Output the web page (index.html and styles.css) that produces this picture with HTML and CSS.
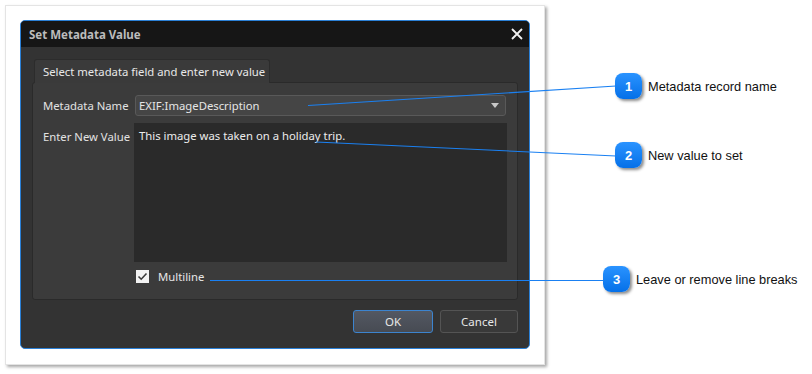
FILE: index.html
```html
<!DOCTYPE html>
<html lang="en">
<head>
    <meta charset="UTF-8">
    <meta name="viewport" content="width=device-width, initial-scale=1.0">
    <title>Set Metadata Value</title>
    <link rel="stylesheet" href="styles.css">
</head>
<body>
  <div class="page">
    <div class="shot">
      <div class="dialog">
        <div class="titlebar">
          <span class="title">Set Metadata Value</span>
          <svg class="close" width="12" height="12" viewBox="0 0 12 12">
            <path d="M1 1 L11 11 M11 1 L1 11" stroke="#f2f2f2" stroke-width="1.8" fill="none"/>
          </svg>
        </div>
        <div class="content">
          <div class="tab">Select metadata field and enter new value</div>
          <div class="panel">
            <div class="row">
              <span class="label">Metadata Name</span>
              <div class="combo">
                <span>EXIF:ImageDescription</span>
                <span class="arrow"></span>
              </div>
            </div>
            <div class="row">
              <span class="label label-top">Enter New Value</span>
              <div class="textarea">This image was taken on a holiday trip.</div>
            </div>
            <div class="check-row">
              <span class="checkbox">
                <svg width="13" height="13" viewBox="0 0 13 13">
                  <path d="M2.5 6.5 L5.2 9.2 L10.5 3.5" stroke="#3a3a3a" stroke-width="1.6" fill="none"/>
                </svg>
              </span>
              <span>Multiline</span>
            </div>
          </div>
          <div class="buttons">
            <button class="btn btn-ok">OK</button>
            <button class="btn">Cancel</button>
          </div>
        </div>
      </div>
    </div>

    <!-- callout lines drawn over the screenshot -->
    <svg class="lines" width="812" height="374" viewBox="0 0 812 374">
      <g stroke="#1a80f2" stroke-width="1.1" fill="none">
        <line x1="308" y1="105.5" x2="616" y2="86"/>
        <line x1="316" y1="142" x2="616" y2="156"/>
        <line x1="210" y1="280.5" x2="604" y2="280.5"/>
      </g>
    </svg>

    <div class="callout callout-1"><span class="badge">1</span><span>Metadata record name</span></div>
    <div class="callout callout-2"><span class="badge">2</span><span>New value to set</span></div>
    <div class="callout callout-3"><span class="badge">3</span><span>Leave or remove line breaks</span></div>
  </div>
</body>
</html>
```

FILE: styles.css
```css
body {
    margin: 0;
    background-color: #fff;
}
.page {
    position: relative;
    width: 812px;
    height: 374px;
    padding: 5px 0 0 5px;
    box-sizing: border-box;
}
.shot {
    width: 540px;
    height: 360px;
    box-sizing: border-box;
    padding: 14px 0 0 14px;
    border: 1px solid #e4e4e4;
    box-shadow: 2px 2px 3px rgba(0, 0, 0, 0.35);
    background-color: #fff;
}
.dialog {
    width: 510px;
    height: 329px;
    box-sizing: border-box;
    border: 1px solid #2b80d6;
    border-radius: 5px;
    background-color: #333;
    overflow: hidden;
    font-family: "Noto Sans", sans-serif;
    font-size: 11.3px;
    color: #e6e6e6;
    white-space: nowrap;
}
.titlebar {
    height: 26px;
    background-color: #161616;
    display: flex;
    align-items: center;
    justify-content: space-between;
    padding: 0 6px 0 8px;
}
.title {
    font-weight: bold;
    font-size: 11.5px;
    color: #bcbcbc;
}
.content {
    padding: 12px 11px 0 11px;
}
.tab {
    display: inline-block;
    margin-left: 2px;
    height: 24px;
    line-height: 23px;
    padding: 0 8px;
    box-sizing: border-box;
    width: 236px;
    background-color: #3a3a3a;
    border: 1px solid #2c2c2c;
    border-bottom: none;
    border-radius: 3px 3px 0 0;
    color: #e8e8e8;
    vertical-align: top;
}
.panel {
    height: 218px;
    box-sizing: border-box;
    background-color: #3b3b3b;
    border: 1px solid #2a2a2a;
    border-radius: 3px;
    padding: 12px 10px 0 10px;
    margin-top: -1px;
}
.row {
    display: flex;
    margin-bottom: 7px;
}
.label {
    width: 92px;
    flex-shrink: 0;
    line-height: 21px;
    color: #e2e2e2;
}
.label-top {
    padding-top: 3px;
}
.combo {
    flex: 1;
    height: 21px;
    box-sizing: border-box;
    background-color: #454545;
    border: 1px solid #595959;
    border-radius: 3px;
    display: flex;
    align-items: center;
    justify-content: space-between;
    padding: 0 6px 0 3px;
    margin-right: 1px;
}
.arrow {
    width: 0;
    height: 0;
    border-left: 4.5px solid transparent;
    border-right: 4.5px solid transparent;
    border-top: 5px solid #c8c8c8;
}
.textarea {
    flex: 1;
    height: 139px;
    box-sizing: border-box;
    background-color: #2a2a2a;
    padding: 5px 5px;
    margin-left: -1px;
    color: #ececec;
}
.check-row {
    display: flex;
    align-items: center;
    margin-left: 93px;
    margin-top: 2px;
    gap: 9px;
}
.checkbox {
    width: 13px;
    height: 13px;
    background-color: #f2f2f2;
    display: flex;
}
.buttons {
    display: flex;
    justify-content: flex-end;
    gap: 7px;
    margin-top: 10px;
}
.btn {
    width: 78px;
    height: 23px;
    font-family: "Noto Sans", sans-serif;
    font-size: 11.5px;
    color: #e8e8e8;
    background-color: #393939;
    border: 1px solid #545454;
    border-radius: 3px;
    padding: 0;
}
.btn-ok {
    width: 80px;
    background: linear-gradient(#535862, #474b53);
    border-color: #3c84cf;
}
.lines {
    position: absolute;
    top: 0;
    left: 0;
    pointer-events: none;
}
.callout {
    position: absolute;
    display: flex;
    align-items: center;
    gap: 6px;
    font-family: "Liberation Sans", Arial, sans-serif;
    font-size: 12.8px;
    color: #111;
}
.callout-1 {
    left: 615px;
    top: 73px;
}
.callout-2 {
    left: 615px;
    top: 142px;
}
.callout-3 {
    left: 603px;
    top: 266px;
}
.badge {
    width: 27px;
    height: 26px;
    border-radius: 8px;
    background: linear-gradient(#2a93ff, #0570e8);
    box-shadow: 2px 2px 3px rgba(0, 0, 0, 0.45);
    color: #fff;
    font-weight: bold;
    font-size: 13px;
    display: flex;
    align-items: center;
    justify-content: center;
}
```
